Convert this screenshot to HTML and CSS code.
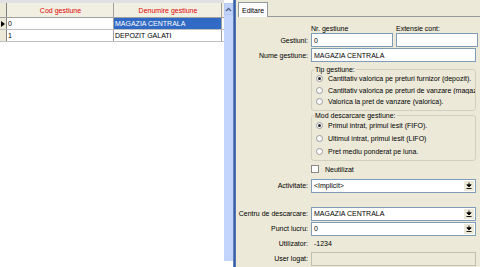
FILE: index.html
```html
<!DOCTYPE html>
<html>
<head>
<meta charset="utf-8">
<link rel="stylesheet" href="styles.css">
</head>
<body>
<div class="app">
  <div class="left">
    <div class="grid">
      <div class="row head">
        <div class="ind"></div>
        <div class="cell c1">Cod gestiune</div>
        <div class="cell c2">Denumire gestiune</div>
      </div>
      <div class="row">
        <div class="ind"><span class="tri"></span></div>
        <div class="cell c1">0</div>
        <div class="cell c2 sel">MAGAZIA CENTRALA</div>
      </div>
      <div class="row">
        <div class="ind"></div>
        <div class="cell c1">1</div>
        <div class="cell c2">DEPOZIT GALATI</div>
      </div>
    </div>
    <div class="vscroll">
      <div class="sbtn"><svg width="7" height="5" viewBox="0 0 7 5"><path d="M1 4 L3.5 1.5 L6 4" fill="none" stroke="#4d6185" stroke-width="1.3"/></svg></div>
      <div class="strack"></div>
    </div>
  </div>
  <div class="split"></div>
  <div class="right">
    <div class="tabs"><div class="tab">Editare</div><div class="tabline"></div></div>
    <div class="form">
      <div class="lbl"></div>
      <div class="pair caps"><span class="half">Nr. gestiune</span><span class="half">Extensie cont:</span></div>

      <div class="lbl">Gestiuni:</div>
      <div class="pair"><div class="inp half">0</div><div class="inp half"></div></div>

      <div class="lbl">Nume gestiune:</div>
      <div class="inp">MAGAZIA CENTRALA</div>

      <div class="lbl"></div>
      <fieldset class="grp g1">
        <legend>Tip gestiune:</legend>
        <div class="rad"><span class="rb on"></span>Cantitativ valorica pe preturi furnizor (depozit).</div>
        <div class="rad"><span class="rb"></span><span class="clip">Cantitativ valorica pe preturi de vanzare (magazin</span></div>
        <div class="rad"><span class="rb"></span>Valorica la pret de vanzare (valorica).</div>
      </fieldset>

      <div class="lbl"></div>
      <fieldset class="grp g2">
        <legend>Mod descarcare gestiune:</legend>
        <div class="rad"><span class="rb on"></span>Primul intrat, primul iesit (FIFO).</div>
        <div class="rad"><span class="rb"></span>Ultimul intrat, primul iesit (LIFO)</div>
        <div class="rad"><span class="rb"></span>Pret mediu ponderat pe luna.</div>
      </fieldset>

      <div class="lbl"></div>
      <div class="chk"><span class="cb"></span>Neutilizat</div>

      <div class="lbl">Activitate:</div>
      <div class="inp combo"><span>&lt;Implicit&gt;</span><span class="cbtn"><svg width="6" height="7" viewBox="0 0 6 7"><path d="M3 0.5 V3 M0.8 2.8 H5.2 L3 5 Z M0.5 6.5 H5.5" fill="#000" stroke="#000" stroke-width="0.9"/></svg></span></div>

      <div class="lbl gap"></div>
      <div class="gap"></div>

      <div class="lbl wide">Centru de descarcare:</div>
      <div class="inp combo"><span>MAGAZIA CENTRALA</span><span class="cbtn"><svg width="6" height="7" viewBox="0 0 6 7"><path d="M3 0.5 V3 M0.8 2.8 H5.2 L3 5 Z M0.5 6.5 H5.5" fill="#000" stroke="#000" stroke-width="0.9"/></svg></span></div>

      <div class="lbl">Punct lucru:</div>
      <div class="inp combo"><span>0</span><span class="cbtn"><svg width="6" height="7" viewBox="0 0 6 7"><path d="M3 0.5 V3 M0.8 2.8 H5.2 L3 5 Z M0.5 6.5 H5.5" fill="#000" stroke="#000" stroke-width="0.9"/></svg></span></div>

      <div class="lbl">Utilizator:</div>
      <div class="inp dis">-1234</div>

      <div class="lbl">User logat:</div>
      <div class="inp dis bord"></div>
    </div>
  </div>
</div>
</body>
</html>
```
FILE: styles.css
```css
* { box-sizing: border-box; }
html, body { margin: 0; padding: 0; }
body {
  width: 480px; height: 267px; overflow: hidden;
  font-family: "Liberation Sans", Arial, sans-serif;
  font-size: 7px; color: #000;
  background: #ece9d8;
}
.app { display: flex; width: 480px; height: 267px; }
.left { width: 233px; display: flex; background: #fff; }
.grid { width: 224px; border-top: 3px solid #e0dfe3; }
.row { display: flex; height: 12px; border-bottom: 1px solid #c0c0c0; }
.row.head { height: 15px; background: #f1efe2; border-bottom: 1px solid #a0a0a0; }
.ind { width: 7px; border-right: 1px solid #808080; background: #ece9d8; display: flex; align-items: center; justify-content: center; }
.tri { width: 0; height: 0; border-left: 4px solid #000; border-top: 3px solid transparent; border-bottom: 3px solid transparent; }
.cell { display: flex; align-items: center; padding-left: 1px; border-right: 1px solid #a0a0a0; white-space: nowrap; overflow: hidden; }
.c1 { width: 107px; }
.c2 { width: 108px; }
.row.head .cell { justify-content: center; color: #e00000; }
.sel { background: #316ac5; color: #fff; }
.vscroll { width: 9px; display: flex; flex-direction: column; margin-top: 3px; height: 258px; background: #c8d7fd; }
.sbtn { height: 12px; display: flex; align-items: center; justify-content: center; background: #c1d3fb; border: 1px solid #b4c8f6; }
.strack { flex: 1; background: #c3d5fd; }
.split { width: 3px; background: linear-gradient(to right, #8aa5d8 0, #3a5fa8 1px, #2e56a0 2px, #7a98cc 3px); }
.right { flex: 1; display: flex; flex-direction: column; }
.tabs { display: flex; height: 17px; align-items: flex-end; padding-left: 2px; }
.tab { height: 15px; padding: 0 3px; display: flex; align-items: center; background: #fcfcfe; border: 1px solid #919b9c; border-bottom: none; }
.tabline { flex: 1; border-bottom: 1px solid #919b9c; }
.form {
  display: grid;
  grid-template-columns: 72px 165px;
  column-gap: 3px;
  row-gap: 1px;
  padding-top: 8px;
  align-items: center;
}
.lbl { text-align: right; white-space: nowrap; }
.lbl.wide { margin-left: -10px; }
.pair { display: flex; gap: 3px; width: 167px; }
.half { width: 82px; }
.caps { height: 7px; line-height: 7px; }
.inp {
  height: 14px; background: #fff; border: 1px solid #7f9db9;
  display: flex; align-items: center; padding-left: 2px; white-space: nowrap; overflow: hidden;
}
.combo { justify-content: space-between; padding-right: 1px; }
.cbtn { width: 10px; height: 10px; display: flex; align-items: center; justify-content: center; background: #ece9d8; }
.dis { background: transparent; border-color: transparent; }
.dis.bord { border-color: #c0c0b0; }
.grp {
  margin: 3px 0 0 0; padding: 0 0 2px 4px; border: 1px solid #d0d0bf; border-radius: 3px; min-width: 0;
}
.g2 { margin-top: 0; }
.grp legend { padding: 0 1px; margin-left: -2px; }
.rad { height: 11.5px; display: flex; align-items: center; white-space: nowrap; overflow: hidden; }
.g2 .rad { height: 13px; }
.clip { overflow: hidden; }
.rb { width: 7px; height: 7px; border: 1px solid #9a9a9a; border-radius: 50%; background: #fff; margin-right: 5px; flex: none; display: flex; align-items: center; justify-content: center; }
.rb.on::after { content: ""; width: 3px; height: 3px; border-radius: 50%; background: #222; }
.chk { display: flex; align-items: center; height: 11px; margin-top: 2px; margin-bottom: 3px; }
.cb { width: 8px; height: 8px; border: 1px solid #888; background: #fff; margin-right: 6px; }
.gap { height: 12px; }
```
